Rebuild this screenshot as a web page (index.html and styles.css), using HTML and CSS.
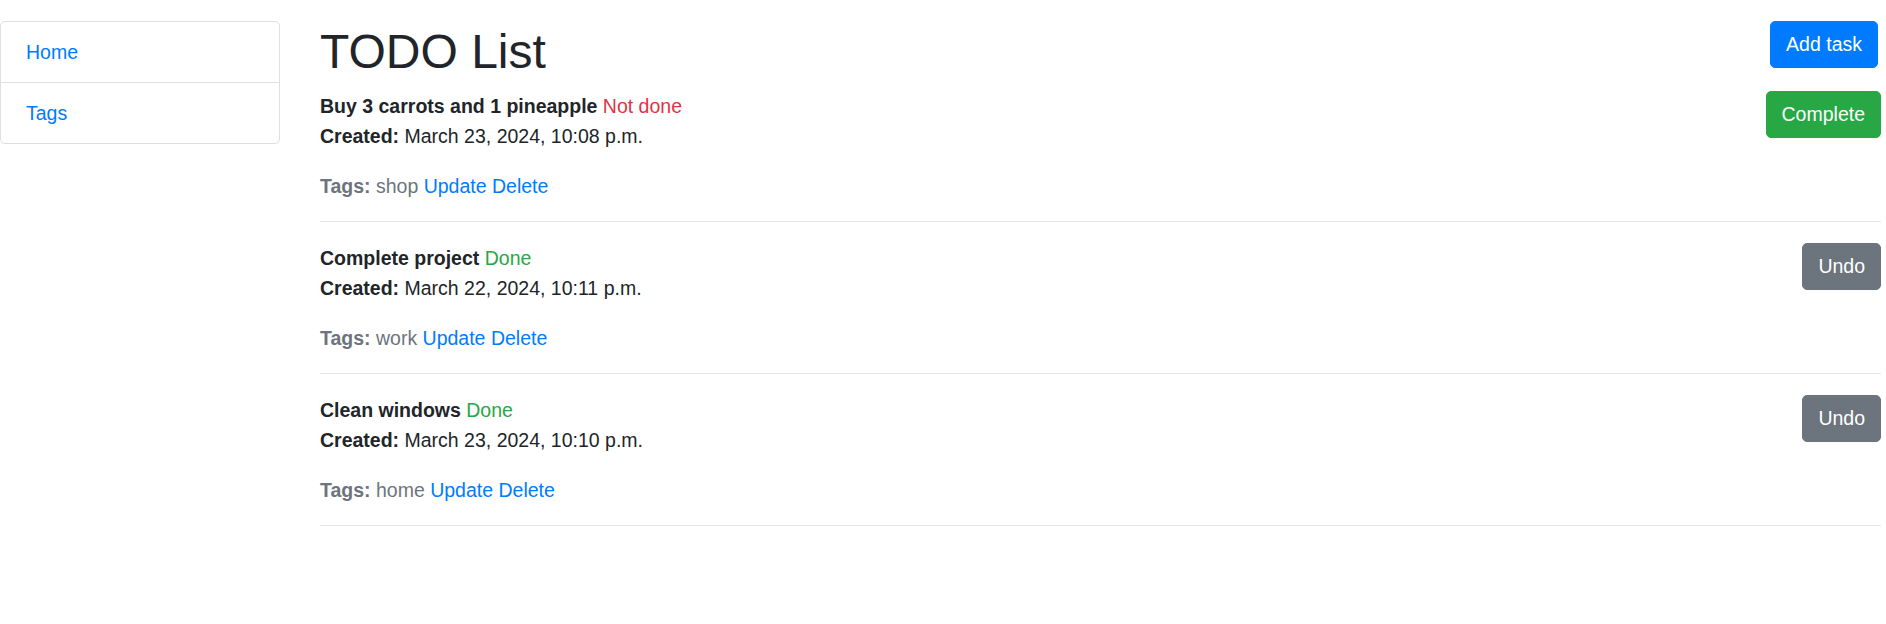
FILE: index.html
```html
<!DOCTYPE html>
<html lang="en">
<head>
<meta charset="utf-8">
<title>TODO List</title>
<link rel="stylesheet" href="styles.css">
</head>
<body>
<div class="layout">
  <nav class="sidebar">
    <ul class="list-group">
      <li class="list-group-item"><a href="#">Home</a></li>
      <li class="list-group-item"><a href="#">Tags</a></li>
    </ul>
  </nav>
  <main class="content">
    <div class="page-head">
      <h1 class="page-title">TODO List</h1>
      <a href="#" class="btn btn-primary">Add task</a>
    </div>

    <div class="task">
      <div class="task-body">
        <div class="task-title"><strong>Buy 3 carrots and 1 pineapple</strong> <span class="text-danger">Not done</span></div>
        <p class="task-created"><strong>Created:</strong> March 23, 2024, 10:08 p.m.</p>
        <p class="task-tags"><strong>Tags:</strong> shop <a href="#">Update</a> <a href="#">Delete</a></p>
      </div>
      <button class="btn btn-success" type="button">Complete</button>
    </div>
    <hr class="divider">

    <div class="task">
      <div class="task-body">
        <div class="task-title"><strong>Complete project</strong> <span class="text-success">Done</span></div>
        <p class="task-created"><strong>Created:</strong> March 22, 2024, 10:11 p.m.</p>
        <p class="task-tags"><strong>Tags:</strong> work <a href="#">Update</a> <a href="#">Delete</a></p>
      </div>
      <button class="btn btn-secondary" type="button">Undo</button>
    </div>
    <hr class="divider">

    <div class="task">
      <div class="task-body">
        <div class="task-title"><strong>Clean windows</strong> <span class="text-success">Done</span></div>
        <p class="task-created"><strong>Created:</strong> March 23, 2024, 10:10 p.m.</p>
        <p class="task-tags"><strong>Tags:</strong> home <a href="#">Update</a> <a href="#">Delete</a></p>
      </div>
      <button class="btn btn-secondary" type="button">Undo</button>
    </div>
    <hr class="divider">
  </main>
</div>
</body>
</html>
```

FILE: styles.css
```css
* {
  box-sizing: border-box;
}

html, body {
  margin: 0;
  padding: 0;
  background: #ffffff;
}

body {
  font-family: "Liberation Sans", Arial, sans-serif;
  font-size: 19.5px;
  line-height: 30px;
  color: #212529;
}

a {
  color: #007bff;
  text-decoration: none;
}

strong {
  font-weight: 700;
}

.layout {
  display: flex;
  align-items: flex-start;
  padding-top: 20px;
  gap: 40px;
}

.sidebar {
  width: 280px;
  flex: 0 0 280px;
  margin-top: 1px;
}

.list-group {
  list-style: none;
  margin: 0;
  padding: 0;
  border: 1px solid #dfdfdf;
  border-radius: 5px;
}

.list-group-item {
  padding: 15px 25px;
  line-height: 30px;
}

.list-group-item + .list-group-item {
  border-top: 1px solid #dfdfdf;
}

.content {
  flex: 1 1 auto;
  min-width: 0;
  padding-right: 5px;
}

.page-head {
  display: flex;
  justify-content: space-between;
  align-items: flex-start;
  margin-bottom: 10px;
}

.page-title {
  margin: 0;
  font-size: 48px;
  font-weight: 400;
  line-height: 56px;
  padding-top: 4px;
  color: #212529;
}

.page-head .btn {
  margin-top: 1px;
  margin-right: 3px;
}

.btn {
  display: inline-block;
  font-family: inherit;
  font-size: 19.5px;
  font-weight: 400;
  line-height: 29px;
  padding: 8px 15px;
  border: 1px solid transparent;
  border-radius: 5px;
  color: #ffffff;
  cursor: pointer;
  text-align: center;
  white-space: nowrap;
}

.btn-primary {
  background: #007bff;
  border-color: #007bff;
}

.btn-success {
  background: #28a745;
  border-color: #28a745;
}

.btn-secondary {
  background: #6c757d;
  border-color: #6c757d;
}

.task {
  display: flex;
  justify-content: space-between;
  align-items: flex-start;
}

.task .btn {
  margin-top: 1px;
}

.task-body {
  padding-top: 1px;
}

.task-title {
  margin: 0;
}

.task-created {
  margin: 0 0 20px;
}

.task-tags {
  margin: 0 0 20px;
  color: #6c757d;
}

.text-danger {
  color: #dc3545;
}

.text-success {
  color: #28a745;
}

.divider {
  margin: 0 0 20px;
  border: 0;
  border-top: 1px solid #e6e6e6;
  height: 0;
}
```
